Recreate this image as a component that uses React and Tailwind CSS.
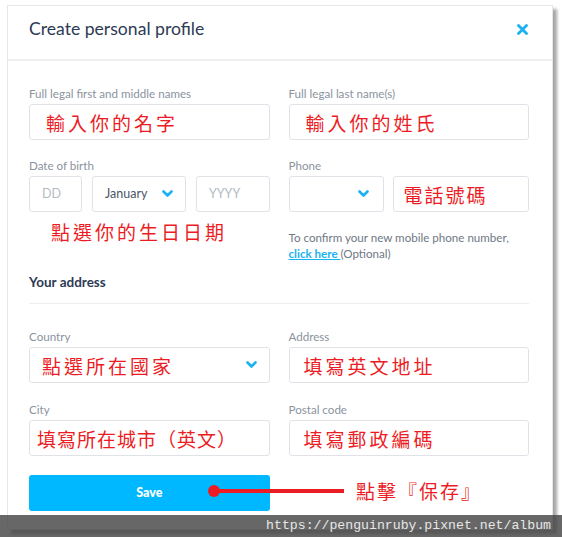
import React from 'react'

const ui = { fontFamily: 'Lato, "Open Sans", sans-serif' }
const cjk = { fontFamily: '"Noto Sans CJK TC", "Noto Sans CJK SC", sans-serif' }

function Chevron() {
  return (
    <svg className="w-[11px] h-[8px]" viewBox="0 0 11 8" fill="none">
      <polyline points="1.5,1.5 5.5,5.5 9.5,1.5" stroke="#1ab2f0" strokeWidth="2.6" strokeLinecap="round" strokeLinejoin="round" />
    </svg>
  )
}

function Label({ children }) {
  return <div className="text-[11.6px] leading-[14px] text-[#8a939e] mb-[3px]">{children}</div>
}

function Box({ children, className = '' }) {
  return (
    <div className={`h-[36px] border border-[#dfe3e8] rounded-[3px] bg-white flex items-center ${className}`}>
      {children}
    </div>
  )
}

function Red({ children, className = '' }) {
  return (
    <span style={cjk} className={`text-[#ec1c24] text-[19px] leading-none ${className}`}>{children}</span>
  )
}

export default function App() {
  return (
    <div className="relative w-[562px] h-[537px] bg-white overflow-hidden" style={ui}>
      <div className="pt-[5px] pl-[7px]">
        <div className="w-[546px] h-[525px] bg-white border border-[#e4e6ea] shadow-[4px_4px_3px_rgba(0,0,0,0.35)]">
          {/* Header */}
          <div className="h-[55px] border-b-2 border-[#eef0f2] flex items-start justify-between pl-[21px] pr-[24px] pt-[11px]">
            <h1 className="text-[17.6px] leading-[24px] text-[#2c3a55]">Create personal profile</h1>
            <svg className="w-[11px] h-[11px] mt-[7px]" viewBox="0 0 11 11">
              <path d="M1.5 1.5 L9.5 9.5 M9.5 1.5 L1.5 9.5" stroke="#1ab2f0" strokeWidth="2.8" strokeLinecap="round" />
            </svg>
          </div>

          {/* Body */}
          <div className="pl-[21px] pr-[23px] pt-[26px]">
            <div className="grid grid-cols-2 gap-x-[19px]">
              <div>
                <Label>Full legal first and middle names</Label>
                <Box className="pl-[16px]"><Red className="tracking-[3px]">輸入你的名字</Red></Box>
              </div>
              <div>
                <Label>Full legal last name(s)</Label>
                <Box className="pl-[16px]"><Red className="tracking-[3px]">輸入你的姓氏</Red></Box>
              </div>
            </div>

            <div className="grid grid-cols-2 gap-x-[19px] mt-[19px]">
              <div>
                <Label>Date of birth</Label>
                <div className="flex gap-[10px]">
                  <Box className="w-[53px] pl-[12px]"><span className="text-[12.5px] text-[#b4bac2]">DD</span></Box>
                  <Box className="w-[94px] pl-[12px] pr-[12px] justify-between">
                    <span className="text-[12.5px] text-[#4b5568]">January</span>
                    <Chevron />
                  </Box>
                  <Box className="flex-1 pl-[12px]"><span className="text-[12.5px] text-[#b4bac2]">YYYY</span></Box>
                </div>
                <div className="pl-[22px] pt-[10px]"><Red className="tracking-[3px]">點選你的生日日期</Red></div>
              </div>
              <div>
                <Label>Phone</Label>
                <div className="flex gap-[9px]">
                  <Box className="w-[95px] justify-end pr-[14px]"><Chevron /></Box>
                  <Box className="flex-1 pl-[10px]"><Red className="tracking-[2px]">電話號碼</Red></Box>
                </div>
                <p className="text-[11.6px] leading-[16px] text-[#6f7885] mt-[18px]">
                  To confirm your new mobile phone number,<br />
                  <span className="text-[#1ab2f0] underline font-bold">click here </span>(Optional)
                </p>
              </div>
            </div>

            <div className="mt-[10px] text-[13.5px] font-bold text-[#2c3a55] pb-[11px] border-b border-[#eceef1]">Your address</div>

            <div className="grid grid-cols-2 gap-x-[19px] mt-[26px]">
              <div>
                <Label>Country</Label>
                <Box className="pl-[12px] pr-[12px] justify-between">
                  <Red className="tracking-[3px]">點選所在國家</Red>
                  <Chevron />
                </Box>
              </div>
              <div>
                <Label>Address</Label>
                <Box className="pl-[14px]"><Red className="tracking-[3px]">填寫英文地址</Red></Box>
              </div>
            </div>

            <div className="grid grid-cols-2 gap-x-[19px] mt-[20px]">
              <div>
                <Label>City</Label>
                <Box className="pl-[7px]"><Red className="tracking-[1px]">填寫所在城市（英文）</Red></Box>
              </div>
              <div>
                <Label>Postal code</Label>
                <Box className="pl-[14px]"><Red className="tracking-[3px]">填寫郵政編碼</Red></Box>
              </div>
            </div>

            <div className="grid grid-cols-2 gap-x-[19px] mt-[19px]">
              <button className="h-[36px] rounded-[3px] bg-[#00b8ff] text-white text-[12.5px] font-black">Save</button>
            </div>
          </div>
        </div>
      </div>

      {/* Annotation arrow */}
      <div className="absolute left-[208px] top-[485px] w-[12px] h-[12px] rounded-full bg-[#ec1c24]" />
      <div className="absolute left-[214px] top-[489px] w-[130px] h-[4px] bg-[#ec1c24]" />
      <div className="absolute left-[356px] top-[481px]"><Red className="tracking-[2px]">點擊『保存』</Red></div>

      {/* Watermark */}
      <div className="absolute left-0 right-0 top-[515px] bottom-0 bg-[rgba(70,70,70,0.82)] flex items-center justify-end pr-[11px]">
        <span className="text-[13.2px] text-[#e6e6e6] leading-none" style={{ fontFamily: '"Liberation Mono", "DejaVu Sans Mono", monospace' }}>
          https://penguinruby.pixnet.net/album
        </span>
      </div>
    </div>
  )
}
